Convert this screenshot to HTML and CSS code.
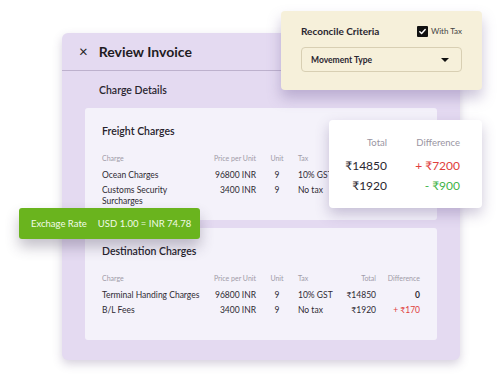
FILE: index.html
```html
<!DOCTYPE html>
<html lang="en">
<head>
    <meta charset="UTF-8">
    <title>Review Invoice</title>
    <link rel="stylesheet" href="styles.css">
</head>
<body>

<div class="stage">
    <div class="invoice">
        <div class="invoice-header">
            <span class="close">&times;</span>
            <h1>Review Invoice</h1>
        </div>
        <h2 class="section-title">Charge Details</h2>

        <div class="charge-card">
            <h3>Freight Charges</h3>
            <div class="charge-table">
                <span class="th">Charge</span>
                <span class="th num">Price per Unit</span>
                <span class="th mid">Unit</span>
                <span class="th">Tax</span>
                <span></span>
                <span></span>

                <span>Ocean Charges</span>
                <span class="num">96800 INR</span>
                <span class="mid">9</span>
                <span>10% GST</span>
                <span></span>
                <span></span>

                <span>Customs Security Surcharges</span>
                <span class="num">3400 INR</span>
                <span class="mid">9</span>
                <span>No tax</span>
                <span></span>
                <span></span>
            </div>
        </div>

        <div class="charge-card">
            <h3>Destination Charges</h3>
            <div class="charge-table">
                <span class="th">Charge</span>
                <span class="th num">Price per Unit</span>
                <span class="th mid">Unit</span>
                <span class="th">Tax</span>
                <span class="th num">Total</span>
                <span class="th num">Difference</span>

                <span class="nowrap">Terminal Handing Charges</span>
                <span class="num">96800 INR</span>
                <span class="mid">9</span>
                <span>10% GST</span>
                <span class="num">&#8377;14850</span>
                <span class="num strong">0</span>

                <span>B/L Fees</span>
                <span class="num">3400 INR</span>
                <span class="mid">9</span>
                <span>No tax</span>
                <span class="num">&#8377;1920</span>
                <span class="num up">+ &#8377;170</span>
            </div>
        </div>
    </div>

    <!-- floating bits on top of the invoice -->
    <div class="criteria">
        <div class="criteria-top">
            <span class="criteria-title">Reconcile Criteria</span>
            <label class="with-tax"><span class="check"><svg width="9" height="9" viewBox="0 0 10 10"><path d="M2 5.2l2 2 4-4.4" fill="none" stroke="#fff" stroke-width="1.6" stroke-linecap="round" stroke-linejoin="round"/></svg></span>With Tax</label>
        </div>
        <div class="select">
            <span>Movement Type</span>
            <span class="caret"></span>
        </div>
    </div>

    <div class="totals">
        <div class="totals-row head">
            <span>Total</span>
            <span>Difference</span>
        </div>
        <div class="totals-row">
            <span>&#8377;14850</span>
            <span class="up">+ &#8377;7200</span>
        </div>
        <div class="totals-row">
            <span>&#8377;1920</span>
            <span class="down">- &#8377;900</span>
        </div>
    </div>

    <div class="rate">
        <span>Exchage Rate</span>
        <span>USD 1.00 = INR 74.78</span>
    </div>
</div>

</body>
</html>
```

FILE: styles.css
```css
body {
    margin: 0;
    background-color: #ffffff;
    font-family: Lato, "DejaVu Sans", sans-serif;
    color: #2a2630;
}
.stage {
    position: relative;
    width: 500px;
    height: 375px;
    overflow: hidden;
    padding-top: 33px;
    box-sizing: border-box;
}
.invoice {
    margin-left: 62px;
    width: 398px;
    height: 327px;
    box-sizing: border-box;
    background-color: #e4daf1;
    border-radius: 6px;
    box-shadow: 0 4px 10px rgba(90, 70, 120, 0.25);
}
.invoice-header {
    display: flex;
    align-items: center;
    gap: 11px;
    height: 37px;
    padding-left: 17px;
    border-bottom: 1px solid #bdb1cd;
}
.close {
    font-size: 15px;
    line-height: 1;
    color: #222;
}
.invoice-header h1 {
    margin: 0;
    font-size: 14px;
    font-weight: 700;
    color: #1e1b22;
}
.section-title {
    margin: 0;
    padding: 13px 0 12px 37px;
    font-size: 10.5px;
    font-weight: 600;
    color: #2a2630;
}
.charge-card {
    margin: 0 23px 8px 23px;
    height: 112px;
    box-sizing: border-box;
    padding: 17px 17px 0 17px;
    background-color: #f4f2fa;
    border-radius: 3px;
}
.charge-card h3 {
    margin: 0 0 16px 0;
    font-size: 10.5px;
    font-weight: 600;
    color: #26222c;
}
.charge-table {
    display: grid;
    grid-template-columns: 103px 51px 42px 42px 36px 44px;
    align-items: start;
    row-gap: 4px;
    font-size: 8.5px;
    line-height: 11px;
    color: #2e2a33;
}
.charge-table .th {
    font-size: 7px;
    color: #a09ba8;
    margin-bottom: 2px;
}
.num {
    text-align: right;
}
.mid {
    text-align: center;
}
.nowrap {
    white-space: nowrap;
}
.strong {
    font-weight: 700;
}
.up {
    color: #e0403c;
}
.down {
    color: #3fb44a;
}
.criteria {
    position: absolute;
    left: 281px;
    top: 11px;
    width: 201px;
    height: 79px;
    box-sizing: border-box;
    padding: 14px 20px 0 20px;
    background-color: #f6f0da;
    border-radius: 4px;
    box-shadow: 0 8px 14px rgba(110, 90, 150, 0.35);
}
.criteria-top {
    display: flex;
    justify-content: space-between;
    align-items: center;
    margin-bottom: 10px;
}
.criteria-title {
    font-size: 10px;
    font-weight: 700;
    color: #2a2630;
}
.with-tax {
    display: flex;
    align-items: center;
    gap: 3px;
    font-size: 8px;
    color: #444;
}
.check {
    display: flex;
    align-items: center;
    justify-content: center;
    width: 11px;
    height: 11px;
    background-color: #111;
    border-radius: 1px;
}
.select {
    display: flex;
    justify-content: space-between;
    align-items: center;
    height: 25px;
    box-sizing: border-box;
    padding: 0 12px 0 9px;
    border: 1px solid #d8cfb3;
    border-radius: 4px;
    font-size: 8.5px;
    font-weight: 700;
    color: #2a2630;
}
.caret {
    width: 0;
    height: 0;
    border-left: 4px solid transparent;
    border-right: 4px solid transparent;
    border-top: 4px solid #111;
}
.totals {
    position: absolute;
    left: 329px;
    top: 120px;
    width: 153px;
    height: 88px;
    box-sizing: border-box;
    padding: 13px 22px 0 10px;
    background-color: #ffffff;
    border-radius: 4px;
    box-shadow: 0 6px 14px rgba(90, 70, 130, 0.3);
}
.totals-row {
    display: grid;
    grid-template-columns: 48px 1fr;
    text-align: right;
    font-size: 12px;
    line-height: 20px;
    color: #2a2630;
}
.totals-row.head {
    font-size: 9.5px;
    color: #9a95a2;
    margin-bottom: 3px;
}
.rate {
    position: absolute;
    left: 19px;
    top: 208px;
    width: 181px;
    height: 31px;
    box-sizing: border-box;
    display: flex;
    align-items: center;
    gap: 11px;
    padding-left: 12px;
    background-color: #6ab41e;
    border-radius: 3px;
    font-size: 9.5px;
    color: #f2fbe8;
    box-shadow: 0 8px 14px rgba(60, 50, 80, 0.3);
}
```
